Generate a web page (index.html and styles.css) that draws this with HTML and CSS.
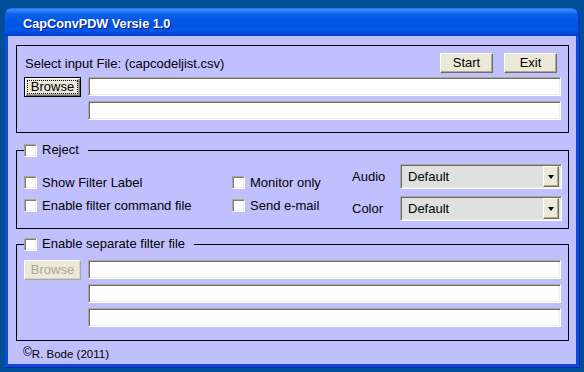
FILE: index.html
```html
<!DOCTYPE html>
<html>
<head>
<meta charset="utf-8">
<link rel="stylesheet" href="styles.css">
</head>
<body>
<div class="window">
  <div class="titlebar"><span class="title">CapConvPDW Versie 1.0</span></div>
  <div class="client">
    <div class="group g1">
      <div class="row-top">
        <span class="label">Select input File: (capcodeljist.csv)</span>
        <div class="btns">
          <button class="btn small">Start</button>
          <button class="btn small">Exit</button>
        </div>
      </div>
      <div class="file-row">
        <button class="btn browse default"><span class="focus">Browse</span></button>
        <div class="fields">
          <div class="field"></div>
          <div class="field"></div>
        </div>
      </div>
    </div>

    <fieldset class="fgroup g2">
      <legend class="legend"><span class="cb"></span><span class="ltext">Reject</span></legend>
      <div class="g2-body">
        <div class="checks">
          <div class="col c1">
            <div class="check"><span class="cb"></span><span>Show Filter Label</span></div>
            <div class="check"><span class="cb"></span><span>Enable filter command file</span></div>
          </div>
          <div class="col c2">
            <div class="check"><span class="cb"></span><span>Monitor only</span></div>
            <div class="check"><span class="cb"></span><span>Send e-mail</span></div>
          </div>
        </div>
        <div class="selects">
          <span class="slabel">Audio</span>
          <div class="select"><span class="sval">Default</span><span class="sbtn"><span class="tri"></span></span></div>
          <span class="slabel">Color</span>
          <div class="select"><span class="sval">Default</span><span class="sbtn"><span class="tri"></span></span></div>
        </div>
      </div>
    </fieldset>

    <fieldset class="fgroup g3">
      <legend class="legend"><span class="cb"></span><span class="ltext">Enable separate filter file</span></legend>
      <div class="file-row">
        <button class="btn browse disabled">Browse</button>
        <div class="fields">
          <div class="field"></div>
          <div class="field"></div>
          <div class="field"></div>
        </div>
      </div>
    </fieldset>

    <div class="footer"><span class="copy">©</span>R. Bode (2011)</div>
  </div>
</div>
</body>
</html>
```

FILE: styles.css
```css
html, body {
  margin: 0;
  padding: 0;
}
body {
  background: #004E98;
  width: 584px;
  height: 372px;
  overflow: hidden;
  font-family: "Liberation Sans", Arial, sans-serif;
  font-size: 13px;
  color: #000;
}
.window {
  width: 575px;
  height: 360px;
  margin: 8px 0 0 5px;
  border-radius: 8px 8px 0 0;
  background: #0A4BD8;
  box-sizing: border-box;
  display: flex;
  flex-direction: column;
  box-shadow: inset -1px 0 #0025A8, inset 0 -1px #0025A8;
}
.titlebar {
  height: 25px;
  padding: 3px 0 0 18px;
  border-radius: 7px 7px 0 0;
  background: linear-gradient(to bottom,
    #0A5CE6 0px, #3C8EFB 1px, #2B80F8 3px, #0E63EC 6px,
    #0257E6 12px, #0055E5 18px, #0458EA 22px, #0049D8 26px, #003DC6 28px);
  box-shadow: inset -2px 0 #0038C4;
}
.title {
  display: block;
  font-family: "Liberation Sans", Arial, sans-serif;
  font-weight: bold;
  font-size: 12.7px;
  line-height: 26px;
  color: #fff;
  text-shadow: 1px 1px #0A1883;
  white-space: nowrap;
}
.client {
  flex: 1;
  margin: 0 4px 4px 3px;
  background: #C0C0FF;
  padding: 9px 7px 0 8px;
  box-sizing: border-box;
  display: flex;
  flex-direction: column;
}

/* group 1 */
.group {
  border: 1px solid #000;
  box-sizing: border-box;
  width: 553px;
}
.g1 {
  height: 88px;
  padding: 7px 7px 0 7px;
}
.row-top {
  display: flex;
  align-items: center;
  height: 20px;
}
.label {
  flex: 1;
  padding-left: 1px;
  white-space: nowrap;
}
.btns {
  display: flex;
  gap: 11px;
  margin-right: 4px;
}
.file-row {
  display: flex;
  gap: 7px;
  align-items: flex-start;
}
.g1 .file-row {
  margin-top: 4px;
}
.fields {
  display: flex;
  flex-direction: column;
  gap: 5px;
}
.field {
  width: 473px;
  height: 19px;
  box-sizing: border-box;
  background: #fff;
  border: 1px solid;
  border-color: #ACA899 #fff #fff #ACA899;
  box-shadow: inset 1px 1px #716F64, inset -1px -1px #F1EFE2;
}

/* buttons */
.btn {
  box-sizing: border-box;
  height: 20px;
  margin: 0;
  padding: 0;
  background: #ECE9D8;
  border: 1px solid;
  border-color: #fff #716F64 #716F64 #fff;
  box-shadow: inset -1px -1px #ACA899;
  font-family: "Liberation Sans", Arial, sans-serif;
  font-size: 13px;
  color: #000;
  line-height: 16px;
  text-align: center;
}
.small {
  width: 53px;
}
.browse {
  width: 57px;
  flex: none;
}
.default {
  border: 1px solid #000;
  box-shadow: inset 1px 1px #fff, inset -1px -1px #716F64, inset -2px -2px #ACA899;
  padding: 2px;
}
.focus {
  display: block;
  height: 14px;
  box-sizing: border-box;
  border: 1px dotted #000;
  line-height: 12px;
}
.disabled {
  color: #ACA899;
  border-color: #fff #ACA899 #ACA899 #fff;
  box-shadow: inset -1px -1px #D8D5C8;
}

/* fieldset groups */
.fgroup {
  margin: 0;
  border: 1px solid #000;
  width: 553px;
  box-sizing: border-box;
  min-width: 0;
}
.legend {
  padding: 0 9px 0 0;
  margin-left: 0;
  display: flex;
  align-items: center;
  height: 15px;
  line-height: 15px;
  gap: 5px;
  white-space: nowrap;
}
.ltext {
  position: relative;
  top: -1px;
}
.cb {
  display: inline-block;
  flex: none;
  width: 13px;
  height: 13px;
  box-sizing: border-box;
  background: #fff;
  border: 1px solid;
  border-color: #ACA899 #fff #fff #ACA899;
  box-shadow: inset 1px 1px #7F7D72, inset -1px -1px #F1EFE2;
}
.g2 {
  margin-top: 10px;
  padding: 6px 6px 7px 7px;
}
.g2-body {
  display: flex;
}
.checks {
  display: flex;
  padding-top: 12px;
}
.col {
  display: flex;
  flex-direction: column;
  gap: 10px;
}
.c1 { width: 208px; }
.c2 { width: 120px; }
.check {
  display: flex;
  align-items: center;
  gap: 5px;
  height: 13px;
  line-height: 13px;
  white-space: nowrap;
}
.selects {
  display: grid;
  grid-template-columns: 48px 162px;
  grid-auto-rows: 25px;
  row-gap: 7px;
  align-items: center;
}
.slabel {
  line-height: 14px;
}
.select {
  height: 25px;
  box-sizing: border-box;
  background: #E0E0E0;
  border: 1px solid;
  border-color: #ACA899 #fff #fff #ACA899;
  box-shadow: inset 1px 1px #716F64, inset -1px -1px #F1EFE2;
  display: flex;
  align-items: center;
  padding: 2px;
}
.sval {
  flex: 1;
  padding-left: 5px;
  line-height: 14px;
}
.sbtn {
  width: 16px;
  height: 21px;
  box-sizing: border-box;
  background: #ECE9D8;
  border: 1px solid;
  border-color: #fff #716F64 #716F64 #fff;
  box-shadow: inset -1px -1px #ACA899;
  display: flex;
  align-items: center;
  justify-content: center;
}
.tri {
  width: 0;
  height: 0;
  border-left: 3.5px solid transparent;
  border-right: 3.5px solid transparent;
  border-top: 4px solid #000;
  margin-top: 1px;
}
.g3 {
  margin-top: 8px;
  padding: 8px 7px 13px 7px;
}
.footer {
  margin: 6px 0 0 7px;
  line-height: 14px;
  font-size: 11.5px;
  white-space: nowrap;
}
.copy {
  font-size: 12px;
  position: relative;
  top: -2px;
}
```
